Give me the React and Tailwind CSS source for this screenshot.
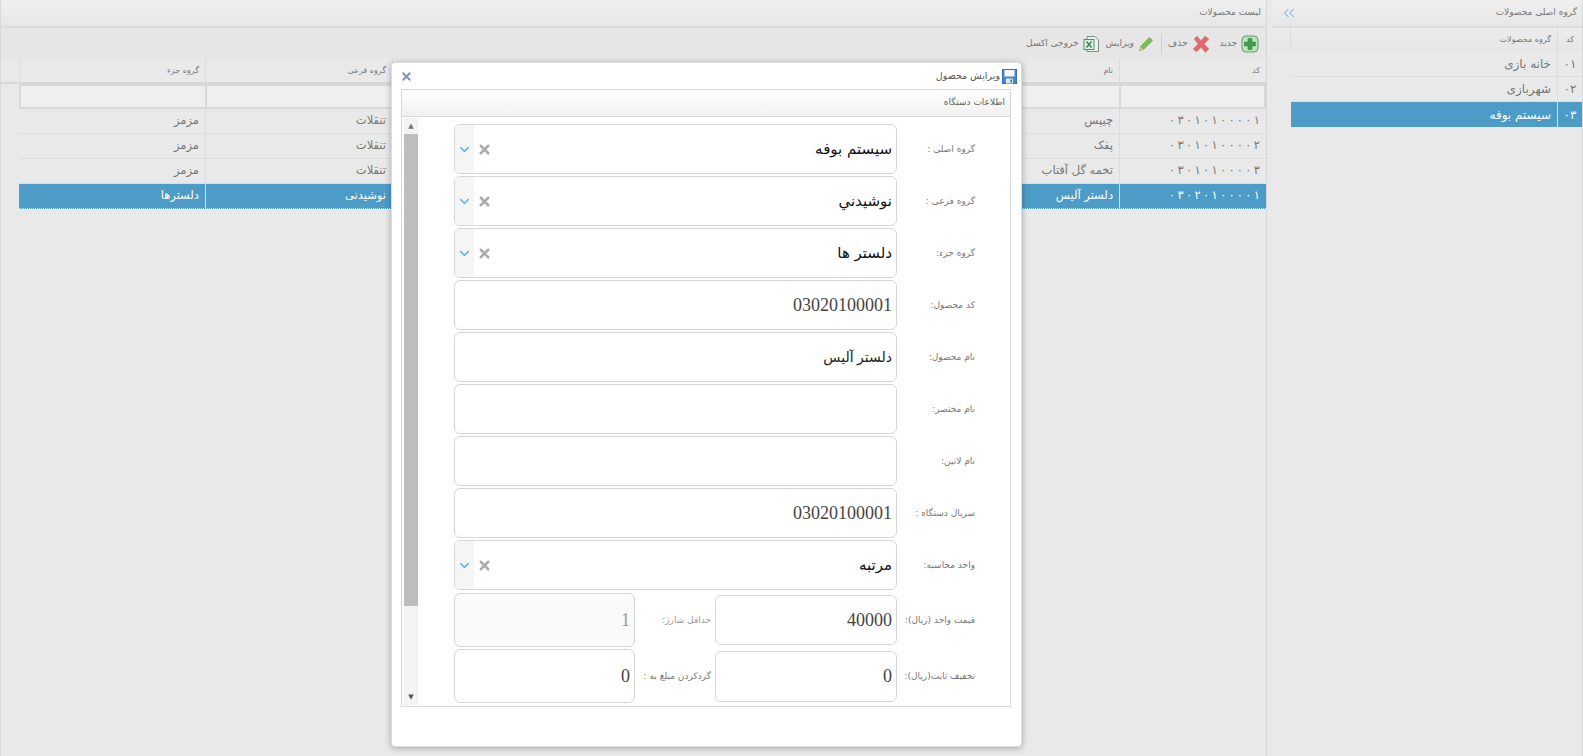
import React from 'react';
import { ChevronsLeft, ChevronDown, X } from 'lucide-react';

const groups = [
  { code: '۰۱', name: 'خانه بازی' },
  { code: '۰۲', name: 'شهربازی' },
  { code: '۰۳', name: 'سیستم بوفه', active: true },
];

const products = [
  { code: '۰۳۰۱۰۱۰۰۰۰۱', name: 'چیپس', sub: 'تنقلات', part: 'مزمز' },
  { code: '۰۳۰۱۰۱۰۰۰۰۲', name: 'پفک', sub: 'تنقلات', part: 'مزمز' },
  { code: '۰۳۰۱۰۱۰۰۰۰۳', name: 'تخمه گل آفتاب', sub: 'تنقلات', part: 'مزمز' },
  { code: '۰۳۰۲۰۱۰۰۰۰۱', name: 'دلستر آلیس', sub: 'نوشیدنی', part: 'دلسترها', active: true },
];

const fields = [
  { label: 'گروه اصلی :', value: 'سیستم بوفه', select: true },
  { label: 'گروه فرعی :', value: 'نوشيدني', select: true },
  { label: 'گروه جزء:', value: 'دلستر ها', select: true },
  { label: 'کد محصول:', value: '03020100001' },
  { label: 'نام محصول:', value: 'دلستر آلیس', small: true },
  { label: 'نام مختصر:', value: '' },
  { label: 'نام لاتین:', value: '' },
  { label: 'سریال دستگاه :', value: '03020100001' },
  { label: 'واحد محاسبه:', value: 'مرتبه', select: true },
];

const PlusIcon = () => (
  <svg width="18" height="18" viewBox="0 0 18 18">
    <rect x="1" y="1" width="16" height="16" rx="4" fill="#bfe3c0" stroke="#5e9f68" />
    <path d="M7 3.5h4V7h3.5v4H11v3.5H7V11H3.5V7H7z" fill="#3f9f4c" stroke="#2f7f3c" strokeWidth="0.5" />
  </svg>
);

const DeleteIcon = () => (
  <svg width="20" height="20" viewBox="0 0 20 20">
    <path d="M3 5l3-3 4 4.5L14 2l4 3-4.5 5 4.5 5-3.5 3.5L10 13.5 5.5 18 2 15l5-5z" fill="#e0686c" stroke="#c9a0a0" strokeWidth="0.8" />
  </svg>
);

const PencilIcon = () => (
  <svg width="16" height="16" viewBox="0 0 16 16">
    <path d="M1.5 14.5l1-4L11.5 1.5l3 3-9 9z" fill="#7cbc5c" stroke="#5f9c46" strokeWidth="0.6" />
    <path d="M1.5 14.5l1-4 3 3z" fill="#d9c79a" />
  </svg>
);

const ExcelIcon = () => (
  <svg width="17" height="18" viewBox="0 0 17 18">
    <path d="M4 1.5h8l3.5 3.5v11.5H4z" fill="#eef2ee" stroke="#7f8f85" />
    <rect x="1" y="4.5" width="10" height="10" fill="#dcefe0" stroke="#4f8f68" />
    <path d="M3.5 6.5l5 6M8.5 6.5l-5 6" stroke="#2f7f50" strokeWidth="1.3" />
  </svg>
);

const SaveIcon = () => (
  <svg width="15" height="15" viewBox="0 0 15 15">
    <rect x="0.5" y="0.5" width="14" height="14" fill="#4a86c8" stroke="#3a70b0" />
    <rect x="2.5" y="1" width="10" height="6.5" fill="#f4f7fb" />
    <rect x="4" y="9.5" width="7" height="5" fill="#dfe8f2" />
    <rect x="8.5" y="10.5" width="1.5" height="3" fill="#3a70b0" />
  </svg>
);

const TitleBar = ({ title, children }) => (
  <div className="flex h-[28px] shrink-0 items-center justify-between border-b-2 border-[#dcdcdc] bg-gradient-to-b from-[#efefef] to-[#e7e7e7] pr-[5px] text-[9px] text-[#777]">
    <span>{title}</span>
    {children}
  </div>
);

const ToolButton = ({ icon, label, className = '' }) => (
  <button className={`flex items-center gap-1 text-[9px] text-[#777] ${className}`}>
    {icon}
    <span>{label}</span>
  </button>
);

const Cell = ({ className = '', children }) => (
  <div className={`flex h-full items-center border-l border-[#dcdcdc] px-1.5 ${className}`}>{children}</div>
);

const Field = ({ value, disabled, small, className = '' }) => (
  <input
    readOnly
    value={value}
    dir="rtl"
    className={`rounded-md border border-[#d6d6d6] px-1 outline-none font-['Liberation_Serif','DejaVu_Sans',serif] ${small ? 'text-[14px] text-[#222]' : 'text-[18px] text-[#444]'} ${disabled ? 'bg-[#fafafa] text-[#999]' : 'bg-white'} ${className}`}
  />
);

const SelectField = ({ value }) => (
  <div className="flex h-[50px] w-[443px] items-center justify-between overflow-hidden rounded-md border border-[#d6d6d6] bg-white">
    <span className="px-1 text-[15px] text-[#111]">{value}</span>
    <div className="flex h-full items-center gap-[3px]">
      <X size={15} strokeWidth={4} className="text-[#aaa]" />
      <div className="flex h-full w-[19px] items-center justify-center bg-[#f5f5f5]">
        <ChevronDown size={15} strokeWidth={2.5} className="text-[#6fb3dc]" />
      </div>
    </div>
  </div>
);

const Label = ({ children, className = '' }) => (
  <label className={`pt-[2px] text-[9px] text-[#777] ${className}`}>{children}</label>
);

const ProductModal = () => (
  <div className="absolute left-[391px] top-[62px] flex h-[685px] w-[631px] flex-col rounded-sm border border-[#ddd] bg-white shadow-[0_1px_6px_rgba(0,0,0,0.3)]">
    <div className="flex h-[26px] items-center justify-between px-[2px]">
      <div className="flex items-center gap-[2px] pr-[2px] text-[9.5px] text-[#555]">
        <SaveIcon />
        <span>ویرایش محصول</span>
      </div>
      <X size={13} strokeWidth={3.5} className="ml-[6px] text-[#7f90c4]" />
    </div>
    <div className="ml-[9px] mr-[10px] flex h-[618px] flex-col border border-[#d8d8d8]">
      <div className="flex h-[27px] shrink-0 items-center border-b border-[#d8d8d8] bg-gradient-to-b from-white to-[#f0f0f0] pr-[5px] text-[9px] text-[#666]">
        اطلاعات دستگاه
      </div>
      <div className="flex min-h-0 flex-1">
        <div className="flex flex-1 flex-col gap-[2px] overflow-hidden pt-[7px]">
          {fields.map((f) => (
            <div key={f.label} className="flex h-[50px] items-center">
              <Label className="w-[113px] pr-[35px]">{f.label}</Label>
              {f.select ? (
                <SelectField value={f.value} />
              ) : (
                <Field value={f.value} small={f.small} className="h-[50px] w-[443px]" />
              )}
            </div>
          ))}
          <div className="mt-[1px] flex h-[54px] items-center">
            <Label className="w-[113px] pr-[35px]">قیمت واحد (ریال):</Label>
            <Field value="40000" className="h-[50px] w-[182px]" />
            <Label className="w-[80px] pr-[4px] text-[#999]">حداقل شارژ:</Label>
            <Field value="1" disabled className="h-[54px] w-[181px]" />
          </div>
          <div className="flex h-[54px] items-center">
            <Label className="w-[113px] pr-[35px]">تخفیف ثابت(ریال):</Label>
            <Field value="0" className="h-[51px] w-[182px]" />
            <Label className="w-[80px] pr-[4px]">گردکردن مبلغ به :</Label>
            <Field value="0" className="h-[54px] w-[181px]" />
          </div>
        </div>
        <div className="my-[1px] ml-[2px] flex w-[14px] shrink-0 flex-col items-center bg-[#f3f3f3]">
          <div className="flex h-[16px] items-center justify-center text-[7px] leading-none text-[#777]">▲</div>
          <div className="h-[472px] w-full bg-[#bdbdbd]" />
          <div className="flex-1" />
          <div className="flex h-[16px] items-center justify-center text-[7px] leading-none text-[#555]">▼</div>
        </div>
      </div>
    </div>
  </div>
);

export default function App() {
  return (
    <div
      dir="rtl"
      className="relative flex h-screen w-full overflow-hidden bg-[#e9e9e9] font-['DejaVu_Sans',sans-serif]"
    >
      {/* groups */}
      <aside className="flex w-[311px] shrink-0 flex-col border-r border-[#d8d8d8]">
        <TitleBar title="گروه اصلی محصولات">
          <ChevronsLeft size={18} strokeWidth={1.4} className="ml-[8px] text-[#7fb4dc]" />
        </TitleBar>
        <div className="flex h-[24px] items-center bg-gradient-to-b from-[#ececec] to-[#e6e6e6] text-[8px] text-[#777]">
          <Cell className="w-[25px] justify-center">کد</Cell>
          <Cell className="w-[267px]">گروه محصولات</Cell>
        </div>
        {groups.map((g) => (
          <div key={g.code} className={`ml-[19px] flex h-[25px] text-[12px] ${g.active ? 'bg-[#4d9bc7] text-white' : 'border-b border-[#dcdcdc] text-[#777]'}`}>
            <Cell className={`w-[25px] justify-center ${g.active ? 'border-[#8fc0dc]' : ''}`}>{g.code}</Cell>
            <div className="flex items-center px-1.5">{g.name}</div>
          </div>
        ))}
      </aside>

      {/* products */}
      <main className="mr-[5px] flex min-w-0 flex-1 flex-col border-x border-[#d8d8d8]">
        <TitleBar title="لیست محصولات" />
        <div className="flex h-[31px] shrink-0 items-center bg-[#e6e6e6] pr-[7px]">
          <ToolButton icon={<PlusIcon />} label="جدید" className="ml-[8px]" />
          <ToolButton icon={<DeleteIcon />} label="حذف" className="ml-[6px]" />
          <div className="ml-[7px] h-[20px] border-r border-[#cfcfcf]" />
          <ToolButton icon={<PencilIcon />} label="ویرایش" className="ml-[6px]" />
          <ToolButton icon={<ExcelIcon />} label="خروجی اکسل" />
        </div>
        <div className="flex h-[25px] items-center border-b-2 border-[#d8d8d8] text-[8px] text-[#777]">
          <Cell className="w-[147px]">کد</Cell>
          <Cell className="flex-1">نام</Cell>
          <Cell className="w-[187px]">گروه فرعی</Cell>
          <Cell className="w-[186px]">گروه جزء</Cell>
          <div className="w-[18px]" />
        </div>
        <div className="flex h-[25px] items-center bg-[#e9e9e9]">
          <div className="h-full w-[147px] border-2 border-[#d8d8d8] bg-[#efefef]" />
          <div className="h-full flex-1 border-2 border-r-0 border-[#d8d8d8] bg-[#efefef]" />
          <div className="h-full w-[187px] border-2 border-r-0 border-[#d8d8d8] bg-[#efefef]" />
          <div className="h-full w-[186px] border-2 border-r-0 border-[#d8d8d8] bg-[#efefef]" />
          <div className="w-[18px]" />
        </div>
        {products.map((p) => (
          <div
            key={p.code}
            className={`ml-[18px] flex h-[25px] text-[11.5px] ${p.active ? 'border-b border-dotted border-[#cfe0ea] bg-[#4d9bc7] text-white' : 'border-b border-[#dcdcdc] text-[#777]'}`}
          >
            <Cell className={`w-[147px] ${p.active ? 'border-[#8fc0dc]' : ''}`}>
              {/* chrome ignores letter-spacing on these digits, so thin spaces */}
              <span dir="ltr">{p.code.split('').join('\u2009')}</span>
            </Cell>
            <Cell className={`flex-1 ${p.active ? 'border-[#8fc0dc]' : ''}`}>{p.name}</Cell>
            <Cell className={`w-[187px] ${p.active ? 'border-[#8fc0dc]' : ''}`}>{p.sub}</Cell>
            <Cell className="w-[186px] border-l-0">{p.part}</Cell>
          </div>
        ))}
      </main>

      <ProductModal />
    </div>
  );
}
